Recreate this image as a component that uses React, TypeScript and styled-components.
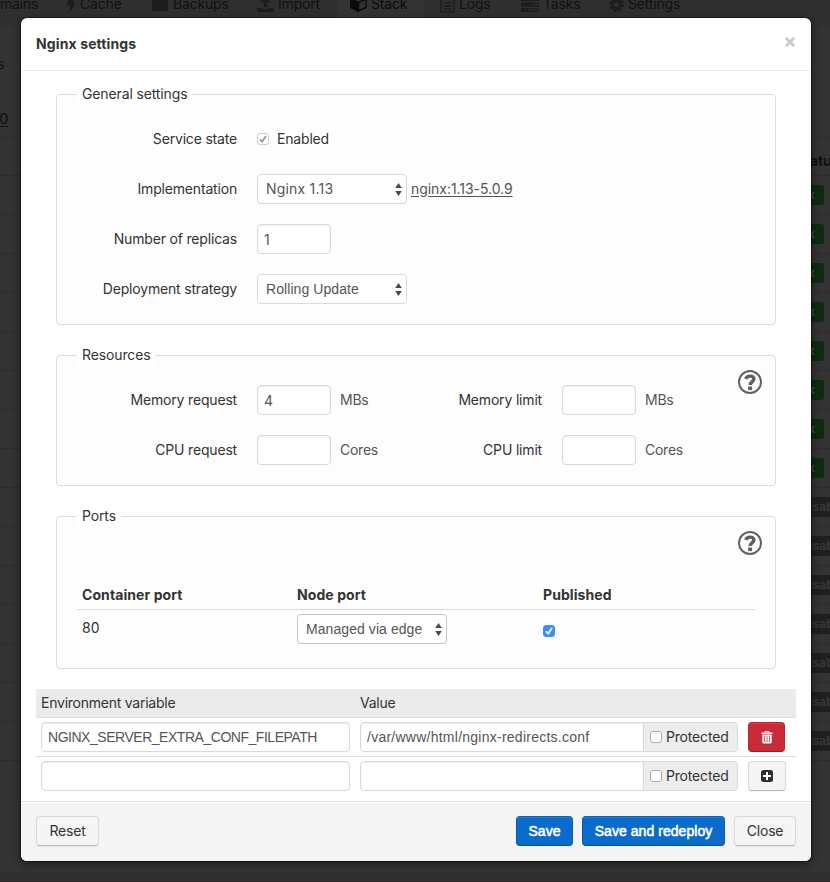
import React from 'react';
import styled, { createGlobalStyle, css } from 'styled-components';

const GlobalStyle = createGlobalStyle`
  * { box-sizing: border-box; }
  body {
    margin: 0;
    background: #333;
    font: 14px/20px Inter, sans-serif;
    letter-spacing: -0.18px;
    color: #333;
  }
`;

const helvetica = '"Liberation Sans", Arial, sans-serif';

/* ---------- dimmed page behind the dialog ---------- */

const Page = styled.div`
  position: relative;
  width: 830px;
  height: 882px;
  overflow: hidden;
  display: flex;
  flex-direction: column;
  background: #333;
  color: #0f0f0f;
`;

const Nav = styled.nav`
  display: flex;
  flex: none;
  height: 27px;
  background: #2f2f2f;
`;

const NavItem = styled.div<{ $w: number; $pad?: number; $active?: boolean }>`
  display: flex;
  align-items: center;
  gap: 4px;
  flex: none;
  width: ${p => p.$w}px;
  padding: 0 0 ${p => (p.$active ? 20 : 19)}px ${p => p.$pad ?? 0}px;
  background: ${p => (p.$active ? '#333' : 'transparent')};
  color: ${p => (p.$active ? '#0a0a0a' : '#101010')};
  white-space: nowrap;
  svg { flex: none; color: ${p => (p.$active ? '#0a0a0a' : '#1c1c1c')}; }
`;

const Columns = styled.div`
  display: flex;
  justify-content: space-between;
  flex: 1;
`;

const LeftStrip = styled.div`
  width: 60px;
  padding-top: 27px;
`;

const StripText = styled.div<{ $underline?: boolean }>`
  height: ${p => (p.$underline ? 28 : 55)}px;
  margin-left: ${p => (p.$underline ? -1 : -3)}px;
  text-decoration: ${p => (p.$underline ? 'underline' : 'none')};
  text-underline-offset: 2px;
  font-size: ${p => (p.$underline ? 15 : 14)}px;
`;

const RightStrip = styled.div`
  width: 36px;
  padding-top: 110px;
  overflow: hidden;
`;

const StatusHead = styled.div`
  height: 39px;
  padding: 13px 0 0 2px;
  border-top: 1px solid #2b2b2b;
  border-bottom: 1px solid #2b2b2b;
  font-weight: 700;
`;

const StripRow = styled.div`
  display: flex;
  align-items: center;
  height: 39px;
  border-bottom: 1px solid #2b2b2b;
`;

const Badge = styled.span<{ $off?: boolean }>`
  flex: none;
  height: 20px;
  padding: 0 9px 0 ${p => (p.$off ? 7 : 5)}px;
  border-radius: ${p => (p.$off ? 0 : 3)}px;
  background: ${p => (p.$off ? '#1f1f1f' : '#0c2c10')};
  color: ${p => (p.$off ? '#383838' : '#3a4a3c')};
  font-size: 12px;
  font-weight: 700;
`;

const PageFoot = styled.div`
  flex: none;
  height: 10px;
  background: #2f2f2f;
  border-bottom: 1px solid #2a2427;
`;

/* ---------- dialog ---------- */

const Dialog = styled.section`
  position: absolute;
  left: 21px;
  top: 18px;
  width: 790px;
  height: 843px;
  display: flex;
  flex-direction: column;
  overflow: hidden;
  border-radius: 6px;
  background: #fff;
  color: #333;
`;

const DialogShadow = styled.div`
  position: absolute;
  left: 21px;
  top: 18px;
  width: 790px;
  height: 843px;
  border-radius: 6px;
  box-shadow: 0 0 0 1px rgba(0, 0, 0, 0.35), 0 3px 9px rgba(0, 0, 0, 0.5);
`;

const Header = styled.header`
  display: flex;
  align-items: center;
  justify-content: space-between;
  flex: none;
  height: 53px;
  padding: 0 16px 0 15px;
  border-bottom: 1px solid #eaeaea;
`;

const Title = styled.h4`
  margin: 0;
  font-size: 14px;
  font-weight: 700;
  letter-spacing: 0.12px;
`;

const CloseX = styled.button`
  display: flex;
  padding: 0;
  margin-bottom: 4px;
  border: 0;
  background: none;
`;

const Body = styled.div`
  flex: 1;
  padding: 13px 35px 0;
`;

const Group = styled.fieldset<{ $h: number }>`
  height: ${p => p.$h}px;
  margin: 0 0 20px;
  padding: 0;
  border: 1px solid #ddd;
  border-radius: 4px;
  background: #fdfdfd;
`;

const Legend = styled.legend`
  height: 21px;
  margin-left: 20px;
  padding: 0 5px;
  line-height: 20px;
  letter-spacing: -0.13px;
  background: #fff;
`;

const Split = styled.div`
  display: flex;
  justify-content: space-between;
`;

const Rows = styled.div`
  display: flex;
  flex-direction: column;
  gap: 20px;
  padding-top: 19px;
`;

const Row = styled.div`
  display: flex;
  align-items: center;
  height: 30px;
`;

const Label = styled.label<{ $w?: number }>`
  width: ${p => p.$w ?? 180}px;
  margin-right: 20px;
  text-align: right;
`;

const Field = styled.div<{ $w?: number; $gap?: number }>`
  display: flex;
  align-items: center;
  gap: ${p => p.$gap ?? 9}px;
  width: ${p => (p.$w ? p.$w + 'px' : 'auto')};
`;

const Unit = styled.span`
  color: #555;
  letter-spacing: -0.25px;
`;

const inputBox = css`
  height: 30px;
  border: 1px solid #d9d9d9;
  border-radius: 4px;
  background: #fff;
  color: #555;
  line-height: 20px;
`;

const Input = styled.input<{ $w: number; $ls?: number; $joined?: boolean; $plain?: boolean }>`
  ${inputBox}
  width: ${p => p.$w}px;
  padding: 0 6px;
  outline: none;
  box-shadow: inset 0 1px 2px rgba(0, 0, 0, 0.07);
  font-size: 14px;
  font-family: ${p => (p.$plain ? 'Inter, sans-serif' : helvetica)};
  letter-spacing: ${p => p.$ls ?? 0}px;
  ${p => p.$joined && 'border-radius: 4px 0 0 4px;'}
`;

const SelectBox = styled.div<{ $strong?: boolean; $inter?: boolean }>`
  ${inputBox}
  display: flex;
  align-items: center;
  justify-content: space-between;
  width: 150px;
  padding: 0 4px 0 8px;
  border-color: ${p => (p.$strong ? '#c4c4c4' : '#d9d9d9')};
  font-family: ${p => (p.$inter ? 'Inter, sans-serif' : helvetica)};
  letter-spacing: ${p => (p.$inter ? 0.2 : 0.07)}px;
`;

const ImageLink = styled.a`
  margin: -1px 0 0 -5px;
  color: #555;
  letter-spacing: -0.05px;
  text-decoration: underline;
  text-underline-offset: 2px;
`;

const Check = styled.span<{ $state: 'disabled' | 'on' | 'off' }>`
  display: flex;
  flex: none;
  align-items: center;
  justify-content: center;
  width: 12px;
  height: 12px;
  border-radius: 3px;
  border: 1px solid ${p => ({ disabled: '#ccc', on: '#3b90f5', off: '#aaa' })[p.$state]};
  background: ${p => (p.$state === 'on' ? '#3b90f5' : '#fff')};
  color: ${p => (p.$state === 'on' ? '#fff' : '#999')};
`;

const Help = styled.div`
  display: flex;
  height: 24px;
  margin: 4px 13px 0 0;
`;

const HelpRow = styled.div`
  display: flex;
  justify-content: flex-end;
  height: 58px;
`;

const PortGrid = styled.div<{ $head?: boolean }>`
  display: grid;
  grid-template-columns: 215px 246px 1fr;
  align-items: start;
  margin: 0 20px;
  padding: ${p => (p.$head ? 0 : 4)}px 0 0 5px;
  height: ${p => (p.$head ? 25 : 38)}px;
  border-bottom: ${p => (p.$head ? '1px solid #ddd' : '0')};
  font-weight: ${p => (p.$head ? 700 : 400)};
  letter-spacing: ${p => (p.$head ? 0.08 : 0)}px;
`;

const PortNumber = styled.span`
  padding-top: 4px;
`;

const PortCheck = styled.span`
  padding-top: 11px;
`;

const EnvTable = styled.div`
  margin: 0 -20px;
`;

const EnvHead = styled.div`
  display: grid;
  grid-template-columns: 319px 1fr;
  height: 29px;
  padding: 4px 5px;
  border-bottom: 1px solid #ddd;
  background: #ebebeb;
  letter-spacing: -0.24px;
`;

const EnvRow = styled.div`
  display: flex;
  gap: 10px;
  height: 39px;
  padding: 4px 5px;
  border-bottom: 1px solid #ddd;
  &:last-child { border-bottom: 0; }
`;

const InputGroup = styled.div`
  display: flex;
  width: 378px;
`;

const Addon = styled.label`
  display: flex;
  align-items: center;
  gap: 4px;
  width: 95px;
  height: 30px;
  margin-left: -1px;
  padding-left: 6px;
  border: 1px solid #d9d9d9;
  border-radius: 0 4px 4px 0;
  background: #ededed;
`;

const tones = {
  plain: css`
    border-color: #d9d9d9 #d9d9d9 #b8b8b8;
    background: #f5f5f5;
    color: #333;
    box-shadow: 0 1px 2px rgba(0, 0, 0, 0.05);
  `,
  primary: css`
    border-color: #0b62bd #0b5cb0 #084f9b;
    background: #0b6bcb;
    color: #fff;
    box-shadow: inset 0 1px 0 rgba(255, 255, 255, 0.12);
    font-family: ${helvetica};
    letter-spacing: 0.05px;
    -webkit-text-stroke: 0.55px #fff;
  `,
  danger: css`
    border-color: #b82631 #b82631 #951b26;
    background: #cb2a37;
    color: #fff;
    box-shadow: inset 0 1px 0 rgba(255, 255, 255, 0.12);
  `,
};

const Button = styled.button<{ $w: number; $tone?: keyof typeof tones }>`
  display: flex;
  flex: none;
  align-items: center;
  justify-content: center;
  width: ${p => p.$w}px;
  height: 30px;
  padding: 0;
  border: 1px solid;
  border-radius: 4px;
  font: 14px/20px Inter, sans-serif;
  letter-spacing: -0.18px;
  white-space: nowrap;
  ${p => tones[p.$tone ?? 'plain']}
`;

const Footer = styled.footer`
  display: flex;
  justify-content: space-between;
  flex: none;
  height: 60px;
  padding: 14px 15px 0;
  border-top: 1px solid #ddd;
  background: #f4f4f4;
  box-shadow: inset 0 1px 0 #fff;
`;

const Actions = styled.div`
  display: flex;
  gap: 9px;
`;

/* ---------- icons ---------- */

const Tick = () => (
  <svg width="10" height="10" viewBox="0 0 10 10" fill="none" stroke="currentColor" strokeWidth="1.7">
    <path d="M2 5.4 4.1 7.6 8 2" />
  </svg>
);

const Arrows = () => (
  <svg width="7" height="13" viewBox="0 0 7 13" fill="#4a4a4a">
    <path d="M3.5 0 6.8 5H.2zM3.5 13 6.8 8H.2z" />
  </svg>
);

const HelpIcon = () => (
  <svg width="24" height="24" viewBox="0 0 24 24" fill="none" stroke="#606060">
    <circle cx="12" cy="12" r="11" strokeWidth="1.9" />
    <path d="M7.7 8.9C8.4 6.8 9.9 6.1 12 6.1c2.4 0 3.9 1.1 3.9 2.9 0 2.6-3.7 2.700-3.7 6.100" strokeWidth="3.4" />
    <path d="M10.100 18.300h4" strokeWidth="3.600" />
  </svg>
);

const CrossIcon = () => (
  <svg width="10" height="10" viewBox="0 0 10 10" stroke="#c9c9c9" strokeWidth="2.8">
    <path d="M.9.9 9.1 9.1M9.1.9.9 9.1" />
  </svg>
);

const TrashIcon = () => (
  <svg width="12" height="13" viewBox="0 0 12 13" fill="#fff">
    <path fillRule="evenodd" d="M.5 1.500H3.700V.9A.9.900 0 0 1 4.600 0h2.800a.9.900 0 0 1 .9.900v.6h3.200V3H.5zM4.700 1.500h2.600V.9H4.700z" />
    <path fillRule="evenodd" d="M1.300 3.600h9.400V11a1.500 1.500 0 0 1-1.500 1.500H2.800A1.500 1.500 0 0 1 1.300 11zM3.300 4.500V11h.8V4.500zM5.600 4.500V11h.8V4.500zM7.900 4.500V11h.8V4.500z" />
  </svg>
);

const PlusIcon = () => (
  <svg width="12" height="12" viewBox="0 0 12 12">
    <rect width="12" height="12" rx="2.5" fill="#2d2d2d" />
    <path d="M6 2v8M2 6h8" stroke="#fff" strokeWidth="2" />
  </svg>
);

const BoltIcon = () => (
  <svg width="10" height="17" viewBox="0 0 10 17" fill="currentColor">
    <path d="M4 1h5L6.5 6.5H10L3 17l1.5-7.5H.5z" />
  </svg>
);

const DriveIcon = () => (
  <svg width="17" height="14" viewBox="0 0 17 14" fill="currentColor">
    <rect width="16" height="14" rx="2" />
  </svg>
);

const UploadIcon = () => (
  <svg width="17" height="16" viewBox="0 0 17 16" fill="currentColor">
    <path d="M8.5 0 14 6h-3.5v5h-4V6H3z" />
    <path d="M0 12h5v1.3h7V12h5v4H0z" />
  </svg>
);

const CubeIcon = () => (
  <svg width="17" height="17" viewBox="0 0 17 17" fill="none" stroke="currentColor" strokeWidth="1.4">
    <path d="M8.5 1 16 4v8.5L8.5 16 1 12.5V4z" />
    <path d="M1 4l7.5 3.5V16L1 12.5z" fill="currentColor" />
    <path d="M8.5 7.5 16 4" />
  </svg>
);

const FileIcon = () => (
  <svg width="15" height="17" viewBox="0 0 15 17" fill="none" stroke="currentColor" strokeWidth="1.3">
    <path d="M1 1h9l4 4v11H1zM4 7h7M4 10h7M4 13h7" />
  </svg>
);

const ServerIcon = () => (
  <svg width="18" height="15" viewBox="0 0 18 15" fill="currentColor">
    <path fillRule="evenodd" d="M0 0h18v4H0zM0 5.5h18v4H0zM11 6.700v1.300h6V6.700zM0 11h18v4H0zM7 12.300v1.300h10v-1.300z" />
  </svg>
);

const GearIcon = () => (
  <svg width="15" height="15" viewBox="0 0 15 15" fill="none" stroke="currentColor">
    <circle cx="7.5" cy="7.5" r="4" strokeWidth="3" />
    <circle cx="7.5" cy="7.5" r="6.4" strokeWidth="2.2" strokeDasharray="2.51 2.51" />
  </svg>
);

/* ---------- data ---------- */

const navItems = [
  { text: 'mains', w: 66 },
  { text: 'Cache', w: 86, icon: <BoltIcon /> },
  { text: 'Backups', w: 105, icon: <DriveIcon /> },
  { text: 'Import', w: 80, icon: <UploadIcon /> },
  { text: 'Stack', w: 87, pad: 13, icon: <CubeIcon />, active: true },
  { text: 'Logs', w: 97, pad: 16, icon: <FileIcon /> },
  { text: 'Tasks', w: 88, icon: <ServerIcon /> },
  { text: 'Settings', w: 120, icon: <GearIcon /> },
];

const statuses = [...Array(8).fill('Ok'), ...Array(7).fill('Disabled')];

const resources = [
  { name: 'Memory', unit: 'MBs', request: '4' },
  { name: 'CPU', unit: 'Cores', request: '' },
];

const Select = ({ value, strong, inter }: { value: string; strong?: boolean; inter?: boolean }) => (
  <SelectBox $strong={strong} $inter={inter}>
    {value}
    <Arrows />
  </SelectBox>
);

const Protected = () => (
  <Addon>
    <Check $state="off" />
    Protected
  </Addon>
);

function BackgroundPage() {
  return (
    <>
      <Nav>
        {navItems.map(n => (
          <NavItem key={n.text} $w={n.w} $pad={n.pad} $active={n.active}>
            {n.icon}
            {n.text}
          </NavItem>
        ))}
      </Nav>
      <Columns>
        <LeftStrip>
          <StripText>s</StripText>
          <StripText $underline>0</StripText>
          <StatusHead />
          {statuses.map((_, i) => <StripRow key={i} />)}
        </LeftStrip>
        <RightStrip>
          <StatusHead>Status</StatusHead>
          {statuses.map((s, i) => (
            <StripRow key={i}>
              <Badge $off={s !== 'Ok'}>{s}</Badge>
            </StripRow>
          ))}
        </RightStrip>
      </Columns>
      <PageFoot />
    </>
  );
}

export default function App() {
  return (
    <Page>
      <GlobalStyle />
      <BackgroundPage />
      <DialogShadow />
      <Dialog>
        <Header>
          <Title>Nginx settings</Title>
          <CloseX aria-label="Close"><CrossIcon /></CloseX>
        </Header>
        <Body>
          <Group $h={241}>
            <Legend>General settings</Legend>
            <Rows>
              <Row>
                <Label>Service state</Label>
                <Field $gap={8}>
                  <Check $state="disabled"><Tick /></Check>
                  Enabled
                </Field>
              </Row>
              <Row>
                <Label>Implementation</Label>
                <Field>
                  <Select value="Nginx 1.13" inter />
                  <ImageLink>nginx:1.13-5.0.9</ImageLink>
                </Field>
              </Row>
              <Row>
                <Label>Number of replicas</Label>
                <Input $w={74} $plain defaultValue="1" />
              </Row>
              <Row>
                <Label>Deployment strategy</Label>
                <Select value="Rolling Update" />
              </Row>
            </Rows>
          </Group>
          <Group $h={141}>
            <Legend>Resources</Legend>
            <Split>
              <Rows>
                {resources.map(r => (
                  <Row key={r.name}>
                    <Label>{r.name} request</Label>
                    <Field $w={185}>
                      <Input $w={74} $plain defaultValue={r.request} />
                      <Unit>{r.unit}</Unit>
                    </Field>
                    <Label $w={100}>{r.name} limit</Label>
                    <Field>
                      <Input $w={74} $plain />
                      <Unit>{r.unit}</Unit>
                    </Field>
                  </Row>
                ))}
              </Rows>
              <Help><HelpIcon /></Help>
            </Split>
          </Group>
          <Group $h={163}>
            <Legend>Ports</Legend>
            <HelpRow><Help><HelpIcon /></Help></HelpRow>
            <PortGrid $head>
              <span>Container port</span>
              <span>Node port</span>
              <span>Published</span>
            </PortGrid>
            <PortGrid>
              <PortNumber>80</PortNumber>
              <Select value="Managed via edge" strong />
              <PortCheck><Check $state="on"><Tick /></Check></PortCheck>
            </PortGrid>
          </Group>
          <EnvTable>
            <EnvHead>
              <span>Environment variable</span>
              <span>Value</span>
            </EnvHead>
            <EnvRow>
              <Input $w={309} $ls={-0.47} defaultValue="NGINX_SERVER_EXTRA_CONF_FILEPATH" />
              <InputGroup>
                <Input $w={284} $ls={0.25} $joined defaultValue="/var/www/html/nginx-redirects.conf" />
                <Protected />
              </InputGroup>
              <Button $w={37} $tone="danger" aria-label="Delete"><TrashIcon /></Button>
            </EnvRow>
            <EnvRow>
              <Input $w={309} />
              <InputGroup>
                <Input $w={284} $joined />
                <Protected />
              </InputGroup>
              <Button $w={38} aria-label="Add"><PlusIcon /></Button>
            </EnvRow>
          </EnvTable>
        </Body>
        <Footer>
          <Button $w={63}>Reset</Button>
          <Actions>
            <Button $w={57} $tone="primary">Save</Button>
            <Button $w={143} $tone="primary">Save and redeploy</Button>
            <Button $w={62}>Close</Button>
          </Actions>
        </Footer>
      </Dialog>
    </Page>
  );
}
